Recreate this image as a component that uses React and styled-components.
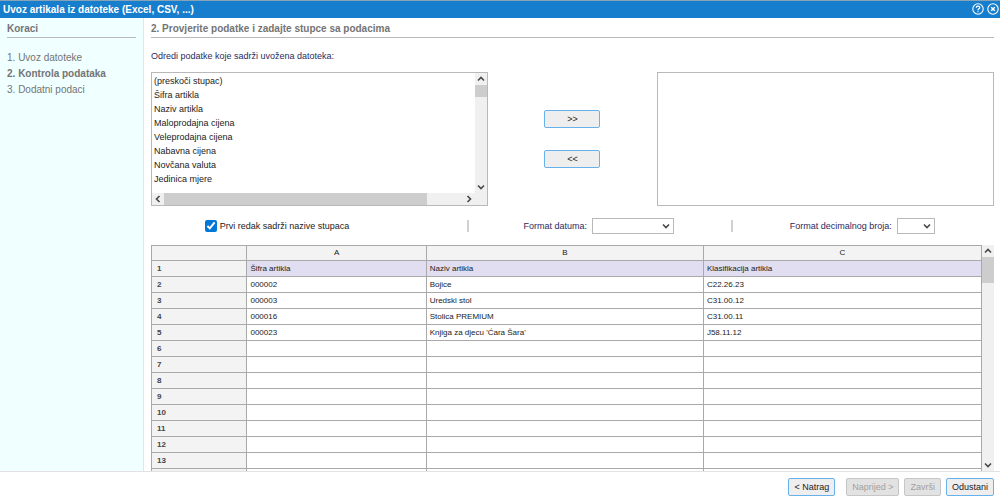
import React, { useState } from 'react';
import styled, { createGlobalStyle, css } from 'styled-components';

const colors = {
  blue: '#167ecd',
  navy: '#2b2b5e',
  grey: '#747474',
  line: '#b9b9b9',
  track: '#f0f0f0',
  thumb: '#cdcdcd',
  grid: '#a9a9a9',
  focus: '#67b2ea'
};

const GlobalStyle = createGlobalStyle`
  * {
    box-sizing: border-box;
  }

  body {
    margin: 0;
    background: #fff;
    color: #222;
    font-family: "Liberation Sans", Arial, sans-serif;
    font-size: 9px;
    line-height: 16px;
  }

  button, select, input {
    font-family: inherit;
  }
`;

const Dialog = styled.div`
  display: flex;
  flex-direction: column;
  height: 100vh;
  border-top: 1px solid #88a3b5;
`;

const TitleBar = styled.header`
  display: flex;
  align-items: center;
  justify-content: space-between;
  flex: none;
  height: 17px;
  padding: 0 1px 0 3px;
  background: ${colors.blue};
  color: #fff;
`;

const Title = styled.h1`
  margin: 0;
  font-size: 10px;
  line-height: 16px;
`;

const TitleActions = styled.div`
  display: flex;
  gap: 3px;
  padding-bottom: 2px;
`;

const IconButton = styled.button`
  display: flex;
  padding: 0;
  border: 0;
  background: none;
  color: #fff;
`;

const Content = styled.div`
  display: flex;
  flex: 1;
  min-height: 0;
`;

const Sidebar = styled.nav`
  flex: none;
  width: 144px;
  padding: 2px 7px;
  border-right: 1px solid #dde8e8;
  background: #f0ffff;
  color: ${colors.grey};
  font-size: 10px;
`;

const Main = styled.main`
  display: flex;
  flex-direction: column;
  flex: 1;
  min-width: 0;
  padding: 2px 6px 0 7px;
`;

const Heading = styled.h2`
  flex: none;
  height: 18px;
  margin: 0;
  border-bottom: 1px solid ${colors.line};
  color: ${colors.grey};
  font-size: 10px;
  line-height: 18px;
`;

const Steps = styled.ol`
  margin: 12px 0 0;
  padding: 0;
  list-style: none;
`;

const Step = styled.li`
  font-weight: ${({ $active }) => ($active ? 'bold' : 'normal')};
`;

const Intro = styled.label`
  flex: none;
  margin: 10px 0 8px;
  color: ${colors.navy};
`;

const Picker = styled.div`
  display: grid;
  grid-template-columns: 2fr 1fr 2fr;
  flex: none;
  height: 134px;
`;

const ListFrame = styled.div`
  display: grid;
  grid-template-columns: minmax(0, 1fr) auto;
  grid-template-rows: minmax(0, 1fr) auto;
  border: 1px solid ${colors.line};
  background: #fff;
`;

const ListBox = styled.select`
  width: 100%;
  height: 100%;
  padding: 3px 0 0;
  border: 0;
  outline: 0;
  overflow: hidden;
  background: #fff;
  color: #222;
  font-size: 9px;
  scrollbar-width: none;

  option {
    min-height: 14px;
    padding: 0 2px;
    line-height: 14px;
  }
`;

const PickerButtons = styled.div`
  display: flex;
  flex-direction: column;
  align-items: center;
  justify-content: center;
  gap: 22px;
`;

const Button = styled.button`
  height: 18px;
  padding: 0 5px;
  border: 1px solid ${colors.focus};
  border-radius: 2px;
  background: #eee;
  color: #222;
  font-size: 9px;
  line-height: 14px;

  &:disabled {
    border-color: #c6c6c6;
    background: #e2e2e2;
    color: #a0a0a0;
  }

  ${({ $move }) => $move && css`
    width: 56px;
  `}
`;

const Bar = styled.div`
  display: flex;
  flex-direction: ${({ $horizontal }) => ($horizontal ? 'row' : 'column')};
  ${({ $horizontal }) => ($horizontal ? 'height: 12px;' : 'width: 12px;')}
  background: ${colors.track};
`;

const BarArrow = styled.span`
  display: flex;
  align-items: center;
  justify-content: center;
  flex: none;
  width: 12px;
  height: 12px;
`;

const BarTrack = styled.div`
  display: flex;
  flex-direction: inherit;
  flex: 1;
`;

const BarThumb = styled.div`
  flex: 0 0 ${({ $size }) => $size};
  background: ${colors.thumb};
`;

const Options = styled.div`
  display: grid;
  grid-template-columns: 6fr 5fr 5fr;
  align-items: center;
  flex: none;
  padding: 12px 0 11px;
`;

const Option = styled.div`
  display: flex;
  align-items: center;
  justify-content: center;
  height: 16px;

  &:first-child {
    justify-content: flex-start;
    padding-left: 17%;
  }

  & + & {
    position: relative;
  }

  & + &::before {
    content: '';
    position: absolute;
    left: 0;
    top: 2px;
    height: 12px;
    border-left: 2px solid #d0d0d0;
  }
`;

const Check = styled.input`
  width: 12px;
  height: 12px;
  margin: 0 3px 0 0;
  accent-color: #0078d7;
`;

const FieldLabel = styled.label`
  margin-right: 5px;
  color: ${colors.navy};
`;

const SelectWrap = styled.div`
  display: grid;
  align-items: center;

  > * {
    grid-area: 1 / 1;
  }

  svg {
    justify-self: end;
    margin-right: 4px;
    pointer-events: none;
  }
`;

const Select = styled.select`
  width: ${({ $width }) => $width};
  height: 16px;
  padding: 0 4px;
  border: 1px solid ${colors.line};
  border-radius: 0;
  background: #fff;
  font-size: 9px;
  appearance: none;
`;

const Preview = styled.div`
  display: flex;
  flex: 1;
  min-height: 0;
  overflow: hidden;
`;

const TableClip = styled.div`
  flex: 1;
  min-width: 0;
  overflow: hidden;
`;

const Table = styled.table`
  width: 100%;
  border-collapse: collapse;
  table-layout: fixed;
  font-size: 8px;
  line-height: 14px;

  th, td {
    height: 16px;
    padding: 0 3px;
    border: 1px solid ${colors.grid};
    text-align: left;
  }
`;

const ColumnHead = styled.th`
  width: ${({ $width }) => $width};
  background: #f3f3f3;
  font-weight: normal;

  &&& {
    height: 15px;
    text-align: center;
  }
`;

const RowHead = styled.th`
  background: #f3f3f3;
  color: #444;

  &&& {
    padding-left: 5px;
  }
`;

const Cell = styled.td`
  background: ${({ $header }) => ($header ? '#e0def0' : '#fff')};
`;

const Footer = styled.footer`
  display: flex;
  align-items: center;
  justify-content: flex-end;
  gap: 5px;
  flex: none;
  height: 30px;
  padding: 1px 6px 0;
  border-top: 1px solid #e2e2e2;

  ${Button}:first-child {
    margin-right: 6px;
  }
`;

const steps = ['Uvoz datoteke', 'Kontrola podataka', 'Dodatni podaci'];

const fields = [
  '(preskoči stupac)',
  'Šifra artikla',
  'Naziv artikla',
  'Maloprodajna cijena',
  'Veleprodajna cijena',
  'Nabavna cijena',
  'Novčana valuta',
  'Jedinica mjere'
];

const columns = [
  { name: 'A', width: '21.6%' },
  { name: 'B', width: '33.4%' },
  { name: 'C', width: '33.5%' }
];

const data = [
  ['Šifra artikla', 'Naziv artikla', 'Klasifikacija artikla'],
  ['000002', 'Bojice', 'C22.26.23'],
  ['000003', 'Uredski stol', 'C31.00.12'],
  ['000016', 'Stolica PREMIUM', 'C31.00.11'],
  ['000023', "Knjiga za djecu 'Ćara Šara'", 'J58.11.12']
];

const rows = Array.from({ length: 13 }, (_, i) => data[i] || ['', '', '']);

const arrows = {
  up: 'M1 5.5 4 2.5 7 5.5',
  down: 'M1 2.5 4 5.5 7 2.5',
  left: 'M5.5 1 2.5 4 5.5 7',
  right: 'M2.5 1 5.5 4 2.5 7'
};

function Arrow ({ to }) {
  return (
    <svg width="8" height="8" viewBox="0 0 8 8" fill="none" stroke="#484848" strokeWidth="1.6" aria-hidden="true">
      <path d={arrows[to]} />
    </svg>
  );
}

function ScrollBar ({ horizontal, size }) {
  return (
    <Bar $horizontal={horizontal} aria-hidden="true">
      <BarArrow><Arrow to={horizontal ? 'left' : 'up'} /></BarArrow>
      <BarTrack>
        <BarThumb $size={size} />
      </BarTrack>
      <BarArrow><Arrow to={horizontal ? 'right' : 'down'} /></BarArrow>
    </Bar>
  );
}

function DropDown ({ id, label, width }) {
  return (
    <Option>
      <FieldLabel htmlFor={id}>{label}</FieldLabel>
      <SelectWrap>
        <Select id={id} $width={width} />
        <Arrow to="down" />
      </SelectWrap>
    </Option>
  );
}

/**
 * Renders the import wizard, step 2
 * @returns {JSX} react jsx
 */
export default function App () {
  const [hasHeader, setHasHeader] = useState(true);

  return (
    <Dialog>
      <GlobalStyle />
      <TitleBar>
        <Title>Uvoz artikala iz datoteke (Excel, CSV, ...)</Title>
        <TitleActions>
          <IconButton type="button" aria-label="Pomoć">
            <svg width="12" height="12" viewBox="0 0 12 12" fill="none" stroke="currentColor" strokeWidth="1.1">
              <circle cx="6" cy="6" r="5.2" />
              <path d="M4.3 4.8C4.3 2.7 7.7 2.7 7.7 4.7 7.7 5.9 6 5.8 6 7.2M6 8.2V9.3" strokeWidth="1.3" />
            </svg>
          </IconButton>
          <IconButton type="button" aria-label="Zatvori">
            <svg width="12" height="12" viewBox="0 0 12 12" fill="none" stroke="currentColor" strokeWidth="1.1">
              <circle cx="6" cy="6" r="5.2" />
              <path d="M4.2 4.2 7.8 7.8M7.8 4.2 4.2 7.8" strokeWidth="1.5" />
            </svg>
          </IconButton>
        </TitleActions>
      </TitleBar>
      <Content>
        <Sidebar>
          <Heading>Koraci</Heading>
          <Steps>
            {steps.map((step, i) => (
              <Step key={step} $active={i === 1}>{i + 1}. {step}</Step>
            ))}
          </Steps>
        </Sidebar>
        <Main>
          <Heading>2. Provjerite podatke i zadajte stupce sa podacima</Heading>
          <Intro htmlFor="fields">Odredi podatke koje sadrži uvožena datoteka:</Intro>
          <Picker>
            <ListFrame>
              <ListBox id="fields" size={8}>
                {fields.map(field => <option key={field}>{field}</option>)}
              </ListBox>
              <ScrollBar size="13%" />
              <ScrollBar horizontal size="88%" />
              <Bar />
            </ListFrame>
            <PickerButtons>
              <Button type="button" $move>&gt;&gt;</Button>
              <Button type="button" $move>&lt;&lt;</Button>
            </PickerButtons>
            <ListFrame>
              <ListBox size={8} aria-label="Odabrani stupci" />
            </ListFrame>
          </Picker>
          <Options>
            <Option>
              <Check
                type="checkbox"
                id="has-header"
                checked={hasHeader}
                onChange={e => setHasHeader(e.target.checked)}
              />
              <label htmlFor="has-header">Prvi redak sadrži nazive stupaca</label>
            </Option>
            <DropDown id="date-format" label="Format datuma:" width="82px" />
            <DropDown id="decimal-format" label="Format decimalnog broja:" width="38px" />
          </Options>
          <Preview>
            <TableClip>
              <Table>
                <thead>
                  <tr>
                    <ColumnHead as="td" $width="11.5%" />
                    {columns.map(({ name, width }) => (
                      <ColumnHead key={name} scope="col" $width={width}>{name}</ColumnHead>
                    ))}
                  </tr>
                </thead>
                <tbody>
                  {rows.map((row, i) => (
                    <tr key={i}>
                      <RowHead scope="row">{i + 1}</RowHead>
                      {row.map((value, j) => (
                        <Cell key={j} $header={hasHeader && i === 0}>{value}</Cell>
                      ))}
                    </tr>
                  ))}
                  <tr aria-hidden="true">
                    <RowHead as="td" />
                    {columns.map(({ name }) => <Cell key={name} />)}
                  </tr>
                </tbody>
              </Table>
            </TableClip>
            <ScrollBar size="13%" />
          </Preview>
        </Main>
      </Content>
      <Footer>
        <Button type="button">&lt; Natrag</Button>
        <Button type="button" disabled>Naprijed &gt;</Button>
        <Button type="button" disabled>Završi</Button>
        <Button type="button">Odustani</Button>
      </Footer>
    </Dialog>
  );
}
